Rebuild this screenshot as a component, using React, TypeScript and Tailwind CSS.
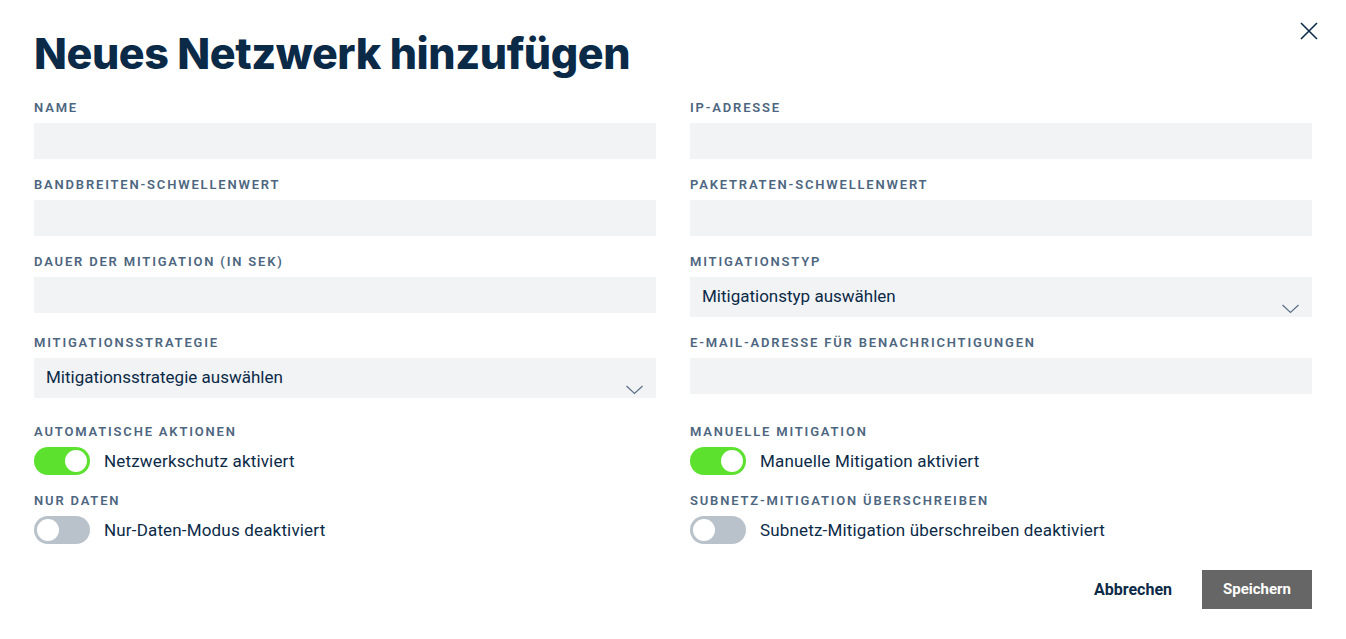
import React from "react";

const labelCls =
  "block pt-px text-[13px] leading-4 font-semibold uppercase tracking-[0.14em] text-[#4d6680] mb-[7px]";
const inputCls = "block w-full h-9 bg-[#f2f3f5]";

function Field({ label, children }: { label: string; children?: React.ReactNode }) {
  return (
    <div>
      <div className={labelCls}>{label}</div>
      {children ?? <div className={inputCls} />}
    </div>
  );
}

function Select({ text }: { text: string }) {
  return (
    <div className="relative h-10 w-full bg-[#f2f3f5] pl-3 pt-[6px] text-[17px] leading-[26px] text-[#0b2a47]">
      {text}
      <svg
        className="absolute right-[13px] bottom-[3px]"
        width="17"
        height="10"
        viewBox="0 0 17 10"
        fill="none"
      >
        <path d="M0.5 1 L8.5 8.5 L16.5 1" stroke="#5b7087" strokeWidth="1.2" />
      </svg>
    </div>
  );
}

function Toggle({ on, text }: { on: boolean; text: string }) {
  return (
    <div className="flex items-center">
      <div
        className={
          "relative h-7 w-14 rounded-full " + (on ? "bg-[#5ce12e]" : "bg-[#b9c2cb]")
        }
      >
        <div
          className={
            "absolute top-[3px] h-[22px] w-[22px] rounded-full bg-white " +
            (on ? "right-[3px]" : "left-[3px]")
          }
        />
      </div>
      <span className="ml-[14px] text-[17px] leading-6 tracking-[0.01em] text-[#0b2a47]">{text}</span>
    </div>
  );
}

export default function App() {
  return (
    <div
      className="relative min-h-[639px] w-full bg-white px-[34px] pt-[26px]"
      style={{ fontFamily: "Roboto, 'Noto Sans', sans-serif" }}
    >
      <button className="absolute right-[28px] top-[22px] p-0" aria-label="close">
        <svg width="18" height="18" viewBox="0 0 18 18" fill="none">
          <path d="M1 1 L17 17 M17 1 L1 17" stroke="#0b2a47" strokeWidth="1.6" />
        </svg>
      </button>
      <h1
        className="text-[43px] leading-[54px] font-extrabold text-[#0b2a47] tracking-[-0.01em]"
        style={{ fontFamily: "Inter, 'Open Sans', sans-serif" }}
      >
        Neues Netzwerk hinzufügen
      </h1>

      <div className="mt-[19px] grid grid-cols-2 gap-x-[34px] gap-y-[17px]">
        <Field label="Name" />
        <Field label="IP-Adresse" />
        <Field label="Bandbreiten-Schwellenwert" />
        <Field label="Paketraten-Schwellenwert" />
        <Field label="Dauer der Mitigation (in Sek)" />
        <Field label="Mitigationstyp">
          <Select text="Mitigationstyp auswählen" />
        </Field>
        <Field label="Mitigationsstrategie">
          <Select text="Mitigationsstrategie auswählen" />
        </Field>
        <Field label="E-Mail-Adresse für Benachrichtigungen" />
      </div>

      <div className="mt-[25px] grid grid-cols-2 gap-x-[34px] gap-y-[17px]">
        <Field label="Automatische Aktionen">
          <Toggle on text="Netzwerkschutz aktiviert" />
        </Field>
        <Field label="Manuelle Mitigation">
          <Toggle on text="Manuelle Mitigation aktiviert" />
        </Field>
        <Field label="Nur Daten">
          <Toggle on={false} text="Nur-Daten-Modus deaktiviert" />
        </Field>
        <Field label="Subnetz-Mitigation überschreiben">
          <Toggle on={false} text="Subnetz-Mitigation überschreiben deaktiviert" />
        </Field>
      </div>

      <div className="mt-[26px] flex justify-end items-center gap-[30px]">
        <button className="px-0 text-[16px] font-bold text-[#0b2a47]">Abbrechen</button>
        <button className="h-[39px] w-[110px] bg-[#666666] text-[15px] font-bold text-white">
          Speichern
        </button>
      </div>
    </div>
  );
}
